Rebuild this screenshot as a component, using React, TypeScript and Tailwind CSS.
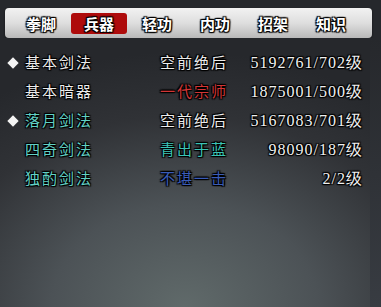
const tabs = ["拳脚", "兵器", "轻功", "内功", "招架", "知识"];

const rows = [
  { name: "基本剑法", mark: true, nameColor: "text-[#ececec]", rank: "空前绝后", rankColor: "text-[#ececec]", value: "5192761/702级" },
  { name: "基本暗器", mark: false, nameColor: "text-[#ececec]", rank: "一代宗师", rankColor: "text-[#d23636]", value: "1875001/500级" },
  { name: "落月剑法", mark: true, nameColor: "text-[#62d2c6]", rank: "空前绝后", rankColor: "text-[#ececec]", value: "5167083/701级" },
  { name: "四奇剑法", mark: false, nameColor: "text-[#62d2c6]", rank: "青出于蓝", rankColor: "text-[#3cc4b6]", value: "98090/187级" },
  { name: "独酌剑法", mark: false, nameColor: "text-[#62d2c6]", rank: "不堪一击", rankColor: "text-[#3a5cb8]", value: "2/2级" },
];

const outline =
  "[text-shadow:0_0_2px_#000,1px_1px_1px_#000,-1px_-1px_1px_#000,1px_-1px_1px_#000,-1px_1px_1px_#000]";

export default function App() {
  return (
    <div className="relative flex h-[307px] w-[381px] flex-col overflow-hidden bg-[#26282c] font-['Noto_Sans_CJK_SC',sans-serif]">
      {/* tab bar */}
      <div className="pl-[5px] pr-[9px] pt-[8px]">
        <div className="flex h-[30px] items-center rounded-[4px] bg-gradient-to-b from-[#f2f2f2] via-[#dedede] to-[#b9b9b9] pl-[7px] shadow-[0_1px_2px_rgba(0,0,0,0.6)]">
          {tabs.map((t) => (
            <div key={t} className="flex w-[58px] justify-center">
              <div
                className={`flex h-[21px] w-[56px] items-center justify-center rounded-[3px] text-[15px] font-bold leading-none text-white ${outline} ${
                  t === "兵器" ? "bg-[#ae0b0b]" : ""
                }`}
              >
                {t}
              </div>
            </div>
          ))}
        </div>
      </div>

      <div className="flex flex-1">
        <div className="flex-1 bg-[radial-gradient(ellipse_90%_95%_at_50%_100%,#606a6a_0%,#4c5256_40%,#303236_75%,#26282c_100%)] pt-[10px]">
          {rows.map((r) => (
            <div key={r.name} className="flex h-[29px] items-center pl-[7px] pr-[7px]">
              <div className="flex w-[18px] items-center justify-center pr-[6px]">
                {r.mark && <div className="h-[8px] w-[8px] rotate-45 bg-[#f4f4f4]" />}
              </div>
              <div className={`w-[135px] text-[15px] tracking-[2px] ${r.nameColor} ${outline}`}>{r.name}</div>
              <div className={`w-[80px] text-[15px] tracking-[2px] ${r.rankColor} ${outline}`}>{r.rank}</div>
              <div
                className={`flex-1 text-right font-['Liberation_Serif',serif] text-[16px] tracking-[1px] text-[#f0f0f0] ${outline}`}
              >
                {r.value}
              </div>
            </div>
          ))}
        </div>
        <div className="w-[11px] bg-gradient-to-b from-[#26282c] to-[#383c42]" />
      </div>
    </div>
  );
}
